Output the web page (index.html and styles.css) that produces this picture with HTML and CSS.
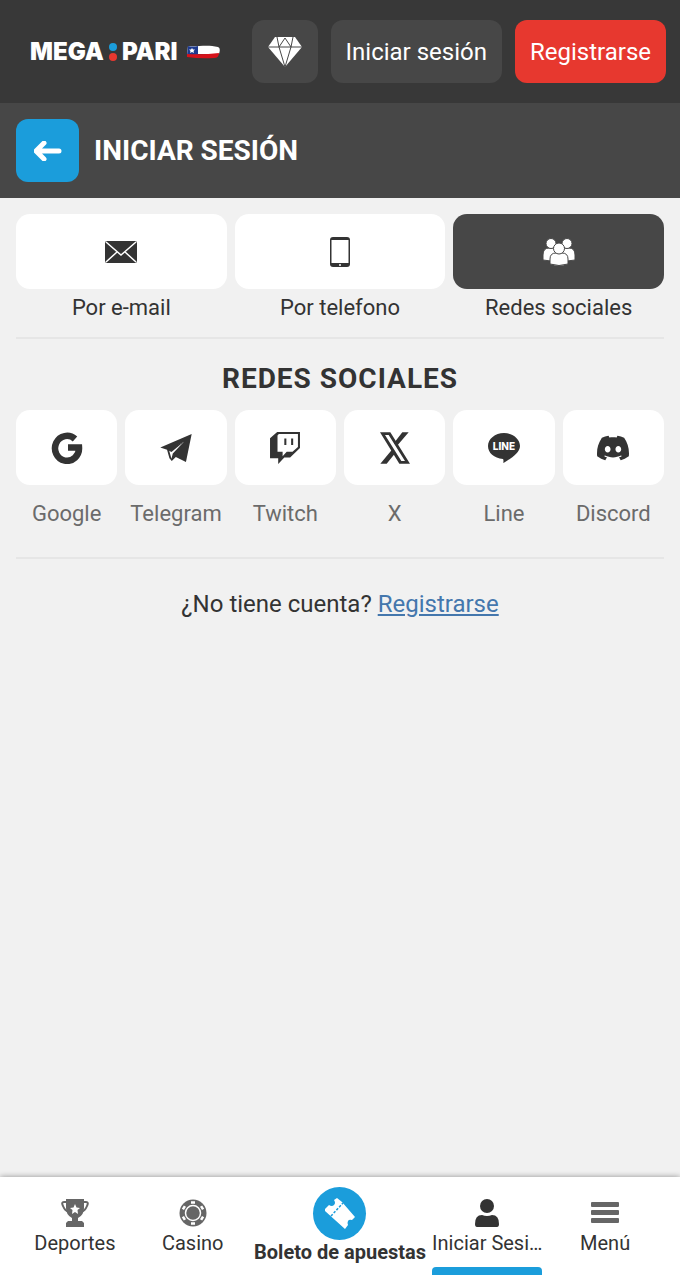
FILE: index.html
```html
<!DOCTYPE html>
<html lang="es">
  <head>
    <meta charset="utf-8">
    <meta name="viewport" content="width=device-width, initial-scale=1">
    <title>Iniciar sesión</title>
    <link rel="stylesheet" href="styles.css">
  </head>
  <body>
    <header class="header">
      <a class="logo" href="#">
        <span>MEGA</span>
        <svg class="logo-dots" viewBox="0 0 8 18" aria-hidden="true">
          <circle cx="4" cy="4" r="4" fill="#1b9ddb" />
          <circle cx="4" cy="14" r="4" fill="#e7382f" />
        </svg>
        <span>PARI</span>
        <svg class="logo-flag" viewBox="0 0 33 14" aria-hidden="true">
          <path d="M1 1C10 2 20-1 31 2Q34 3 32 9H0z" fill="#fff" />
          <path d="M1 1Q6 2 11 1V10H0z" fill="#1d3a8f" />
          <path d="M0 9Q16 10 32 8Q32 13 27 13Q14 14 0 12z" fill="#d5121b" />
          <path d="M5 3l1 1.500h2L6.500 6 7 8 5 7 3 8l.5-2L2 4.500h2z" fill="#fff" />
        </svg>
      </a>
      <button class="btn btn-icon" type="button" aria-label="Bonos">
        <svg width="34" height="30" viewBox="0 0 34 30" aria-hidden="true">
          <path d="M7 0H27L34 10 17 30 0 10z" fill="#fff" />
          <path d="M0 10H34M9 0l2 10L17 1l6 9 2-10M11 10l6 20 6-20" fill="none" stroke="#474747" />
        </svg>
      </button>
      <button class="btn" type="button">Iniciar sesión</button>
      <button class="btn btn-red" type="button">Registrarse</button>
    </header>

    <div class="title-bar">
      <button class="back" type="button" aria-label="Volver">
        <svg width="28" height="20" viewBox="0 0 28 20" aria-hidden="true">
          <path d="M10 2L2 10l8 8M3 10H25" fill="none" stroke="#fff" stroke-width="5" stroke-linecap="round" stroke-linejoin="round" />
        </svg>
      </button>
      <h1>INICIAR SESIÓN</h1>
    </div>

    <main class="content">
      <div class="tabs">
        <button class="tab" type="button">
          <span class="tile">
            <svg width="32" height="24" viewBox="0 0 32 24" aria-hidden="true">
              <rect y="1" width="32" height="22" rx="2" fill="#333" />
              <path d="M1 2l15 13L31 2M1 22l11-10M31 22L20 12" fill="none" stroke="#fff" stroke-width="1.500" />
            </svg>
          </span>
          <span class="tab-label">Por e-mail</span>
        </button>
        <button class="tab" type="button">
          <span class="tile">
            <svg width="20" height="30" viewBox="0 0 20 30" aria-hidden="true">
              <rect width="20" height="30" rx="3" fill="#333" />
              <rect x="1.500" y="3" width="17" height="23" fill="#fff" />
              <circle cx="10" cy="28" r="1" fill="#fff" />
            </svg>
          </span>
          <span class="tab-label">Por telefono</span>
        </button>
        <button class="tab active" type="button">
          <span class="tile">
            <svg width="34" height="28" viewBox="0 0 34 28" fill="#fff" stroke="#474747" aria-hidden="true">
              <path d="M1 22v-5q0-7 6-7h4q6 0 6 6v6q-8 2-16 0z" />
              <path d="M17 22v-6q0-6 6-6h4q6 0 6 7v5q-8 2-16 0z" />
              <circle cx="9" cy="5.500" r="5" />
              <circle cx="25" cy="5.500" r="5" />
              <path d="M8 26v-5q0-6 6-6h6q6 0 6 6v5q-9 3-18 0z" />
              <circle cx="17" cy="10.500" r="5.500" />
            </svg>
          </span>
          <span class="tab-label">Redes sociales</span>
        </button>
      </div>

      <section class="social">
        <h2>REDES SOCIALES</h2>
        <div class="social-list">
          <a class="social-item" href="#">
            <span class="tile">
              <svg width="32" height="32" viewBox="0 0 32 32" aria-hidden="true">
                <path d="M24 7A12 12.500 0 1 0 28 15.500H17" fill="none" stroke="#333" stroke-width="6.500" />
              </svg>
            </span>
            <span class="social-name">Google</span>
          </a>
          <a class="social-item" href="#">
            <span class="tile">
              <svg width="32" height="28" viewBox="0 0 93 83" fill="#333" aria-hidden="true">
                <path d="M0 40L93 0 76 83 46 68 34 80 27 72 20 47z" />
                <path d="M26 48L70 23 37 58 33 73z" fill="#fff" />
                <path d="M20 47L70 23 33 53z" />
              </svg>
            </span>
            <span class="social-name">Telegram</span>
          </a>
          <a class="social-item" href="#">
            <span class="tile">
              <svg width="30" height="32" viewBox="0 0 88 94" fill="#333" aria-hidden="true">
                <path d="M0 18L21 0H88V47L59 75H42L24 94V77H0z" />
                <path d="M26 6H82V44L66 58H49L37 71V58H22V10z" fill="#fff" />
                <path d="M42 19h6v19h-6zM62 19h6v19h-6z" />
              </svg>
            </span>
            <span class="social-name">Twitch</span>
          </a>
          <a class="social-item" href="#">
            <span class="tile">
              <svg width="30" height="32" viewBox="0 0 90 94" fill="#333" aria-hidden="true">
                <path d="M67 0H86L50 42 42 32zM1 94H20L46 62 37 51z" />
                <path d="M0 0H31L90 94H58zM15 8L64 86H75L26 8z" fill-rule="evenodd" />
              </svg>
            </span>
            <span class="social-name">X</span>
          </a>
          <a class="social-item" href="#">
            <span class="tile">
              <svg width="32" height="30" viewBox="0 0 32 30" aria-hidden="true">
                <path d="M16 0C25 0 32 6 32 13 32 20 22 26 15.500 30 15 30 16 27 15 26 6 25 0 20 0 13 0 6 7 0 16 0z" fill="#333" />
                <text class="line-text" x="16" y="17" text-anchor="middle">LINE</text>
              </svg>
            </span>
            <span class="social-name">Line</span>
          </a>
          <a class="social-item" href="#">
            <span class="tile">
              <svg width="32" height="32" viewBox="0 0 24 24" fill="#333" aria-hidden="true">
                <path d="M20.317 4.370a19.800 19.800 0 00-4.885-1.515.074.074 0 00-.079.037c-.211.375-.445.865-.608 1.250-1.845-.276-3.680-.276-5.487 0-.164-.393-.406-.874-.618-1.250a.077.077 0 00-.079-.037 19.740 19.740 0 00-4.885 1.515.070.070 0 00-.032.028C.533 9.046-.319 13.580.099 18.058a.082.082 0 00.031.056c2.053 1.508 4.041 2.423 5.993 3.029a.078.078 0 00.084-.028c.462-.630.873-1.295 1.226-1.994a.076.076 0 00-.042-.106c-.653-.248-1.274-.550-1.872-.892a.077.077 0 01-.008-.128c.126-.094.252-.192.372-.291a.074.074 0 01.078-.011c3.928 1.793 8.180 1.793 12.061 0a.074.074 0 01.079.010c.120.099.246.198.373.292a.077.077 0 01-.007.128 12.300 12.300 0 01-1.873.891.077.077 0 00-.041.107c.360.698.772 1.363 1.225 1.993a.076.076 0 00.084.029c1.961-.607 3.950-1.522 6.002-3.029a.077.077 0 00.031-.055c.500-5.177-.838-9.674-3.549-13.660a.061.061 0 00-.031-.029zM8.020 15.331c-1.183 0-2.157-1.086-2.157-2.419 0-1.333.956-2.419 2.157-2.419 1.211 0 2.176 1.095 2.157 2.419 0 1.333-.956 2.419-2.157 2.419zm7.975 0c-1.183 0-2.157-1.086-2.157-2.419 0-1.333.955-2.419 2.157-2.419 1.211 0 2.176 1.095 2.157 2.419 0 1.333-.946 2.419-2.157 2.419z" />
              </svg>
            </span>
            <span class="social-name">Discord</span>
          </a>
        </div>
      </section>

      <p class="signup">¿No tiene cuenta? <a href="#">Registrarse</a></p>
    </main>

    <nav class="bottom-nav">
      <a class="nav-item" href="#">
        <svg width="28" height="28" viewBox="0 0 28 28" fill="#666" aria-hidden="true">
          <path d="M6 3H3q-3 0-1 4 2 5 6 6M22 3h3q3 0 1 4-2 5-6 6" fill="none" stroke="#666" stroke-width="2" />
          <path d="M5 0H23V9q0 7-6 10v3h4l2 2v4H5v-4l2-2h4v-3q-6-3-6-10z" />
          <path d="M14 5l1.500 3.500 3.500.5-2.500 2 .5 4-3-2-3 2 .5-4L9 9l3.500-.5z" fill="#fff" />
        </svg>
        <span>Deportes</span>
      </a>
      <a class="nav-item" href="#">
        <svg width="28" height="28" viewBox="0 0 28 28" aria-hidden="true">
          <circle cx="14" cy="14" r="13.500" fill="#666" />
          <circle cx="14" cy="14" r="7.500" fill="none" stroke="#fff" stroke-width="1.500" />
          <g stroke="#fff" stroke-width="2.500">
            <path d="M12 3.500h4M12 24.500h4" />
            <path d="M12 3.500h4M12 24.500h4" transform="rotate(60 14 14)" />
            <path d="M12 3.500h4M12 24.500h4" transform="rotate(120 14 14)" />
          </g>
        </svg>
        <span>Casino</span>
      </a>
      <a class="nav-item nav-main" href="#">
        <span class="nav-circle">
          <svg width="30" height="31" viewBox="0 0 30 31" aria-hidden="true">
            <path d="M0 11L4 7q3 2 5 0 2-2 0-5L12 0 17 4 30 19 27 22q-3-1-4 1-1 2 0 4L20 31 0 13z" fill="#fff" />
            <path d="M6 18L18 5" stroke="#1b9ddb" stroke-width="1.500" stroke-dasharray="2.500 1.500" />
          </svg>
        </span>
        <span>Boleto de apuestas</span>
      </a>
      <a class="nav-item current" href="#">
        <svg width="28" height="28" viewBox="0 0 28 28" fill="#333" aria-hidden="true">
          <circle cx="14" cy="7" r="7" />
          <path d="M2 25q0-9 7-9 5 2 10 0 7 0 7 9 0 3-2 3H4q-2 0-2-3z" />
        </svg>
        <span>Iniciar Sesi…</span>
      </a>
      <a class="nav-item" href="#">
        <svg width="28" height="28" viewBox="0 0 28 28" fill="#666" aria-hidden="true">
          <rect y="3" width="28" height="5" rx="1" />
          <rect y="11" width="28" height="5" rx="1" />
          <rect y="19" width="28" height="5" rx="1" />
        </svg>
        <span>Menú</span>
      </a>
    </nav>
  </body>
</html>
```
FILE: styles.css
```css
* {
  box-sizing: border-box;
}

body {
  margin: 0;
  min-height: 100vh;
  display: flex;
  flex-direction: column;
  font-family: Roboto, sans-serif;
  background-color: #f1f1f1;
  color: #333;
}

h1,
h2,
p {
  margin: 0;
}

a {
  color: inherit;
  text-decoration: none;
}

button {
  font: inherit;
  color: inherit;
  border: none;
  padding: 0;
  cursor: pointer;
}

svg {
  display: block;
  flex: none;
}

.header {
  display: flex;
  align-items: center;
  gap: 13px;
  padding: 20px 14px;
  background-color: #383838;
  color: #fff;
}

.logo {
  display: flex;
  align-items: center;
  gap: 5px;
  margin: 0 auto 0 16px;
  font-family: Inter, sans-serif;
  font-size: 24px;
  font-weight: 900;
  line-height: 24px;
}

.logo-dots {
  width: 8px;
  height: 18px;
}

.logo-flag {
  width: 33px;
  height: 14px;
  margin-left: 4px;
}

.btn {
  display: flex;
  align-items: center;
  height: 63px;
  padding: 0 15px;
  border-radius: 12px;
  background-color: #474747;
  font-size: 24px;
}

.btn-icon {
  padding: 0 16px;
}

.btn-red {
  background-color: #e7382f;
}

.title-bar {
  display: flex;
  align-items: center;
  gap: 15px;
  padding: 16px;
  background-color: #474747;
  color: #fff;
}

.title-bar h1 {
  font-size: 28px;
  line-height: 32px;
}

.back {
  display: flex;
  align-items: center;
  justify-content: center;
  width: 63px;
  height: 63px;
  border-radius: 12px;
  background-color: #1b9ddb;
}

.content {
  flex: 1;
  padding: 16px;
}

.tabs {
  display: grid;
  grid-template-columns: repeat(3, 1fr);
  gap: 8px;
  padding-bottom: 16px;
  border-bottom: 2px solid #e6e6e6;
}

.tab {
  background: none;
}

.tile {
  display: flex;
  align-items: center;
  justify-content: center;
  height: 75px;
  border-radius: 14px;
  background-color: #fff;
}

.active .tile {
  background-color: #474747;
}

.tab-label {
  display: block;
  margin-top: 6px;
  font-size: 22px;
  line-height: 26px;
}

.social {
  padding: 24px 0 30px;
  border-bottom: 2px solid #e6e6e6;
  text-align: center;
}

.social h2 {
  margin-bottom: 15px;
  font-size: 28px;
  line-height: 32px;
  letter-spacing: 1px;
}

.social-list {
  display: grid;
  grid-template-columns: repeat(6, 1fr);
  gap: 8px;
}

.social-name {
  display: block;
  margin-top: 16px;
  font-size: 22px;
  line-height: 26px;
  color: #6b6b6b;
}

.line-text {
  font-family: Inter, sans-serif;
  font-size: 10px;
  font-weight: 800;
  fill: #fff;
}

.signup {
  padding-top: 30px;
  font-size: 24px;
  line-height: 30px;
  text-align: center;
}

.signup a {
  color: #4477ad;
  text-decoration: underline;
}

.bottom-nav {
  display: grid;
  grid-template-columns: 2fr 2fr 3fr 2fr 2fr;
  padding: 0 16px 5px;
  background-color: #fff;
  box-shadow: 0 0 6px rgba(0, 0, 0, 0.4);
}

.nav-item {
  display: flex;
  flex-direction: column;
  align-items: center;
  gap: 4px;
  min-width: 0;
  height: 98px;
  margin: 0 4px;
  padding-top: 22px;
  font-size: 20px;
  line-height: 24px;
  white-space: nowrap;
}

.nav-main {
  gap: 0;
  margin: 0;
  padding-top: 10px;
  font-weight: bold;
}

.nav-circle {
  display: flex;
  align-items: center;
  justify-content: center;
  width: 53px;
  height: 53px;
  border-radius: 50%;
  background-color: #1b9ddb;
}

.current::after {
  content: "";
  width: 100%;
  height: 8px;
  margin-top: auto;
  border-radius: 4px 4px 0 0;
  background-color: #1b9ddb;
}
```
